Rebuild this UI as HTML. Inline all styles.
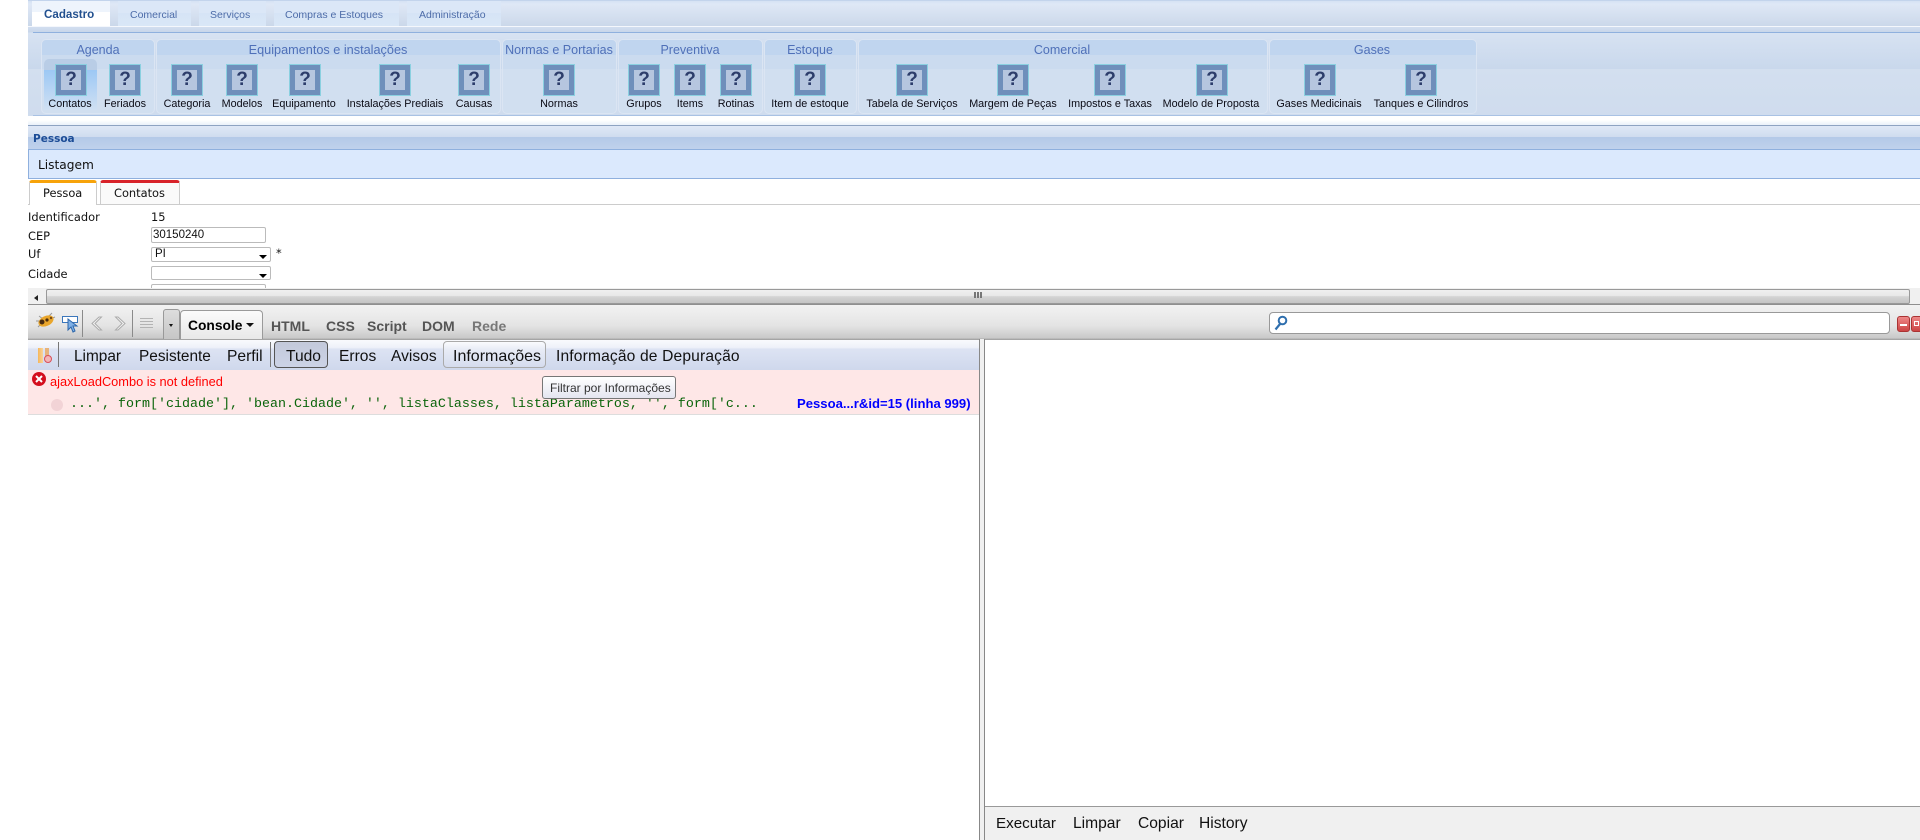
<!DOCTYPE html>
<html><head><meta charset="utf-8"><title>Pessoa</title>
<style>
html,body{margin:0;padding:0;background:#fff}
#p{position:relative;width:1920px;height:840px;overflow:hidden;background:#fff;font-family:"Liberation Sans",sans-serif;color:#000}
#p div,#p span,#p svg{position:absolute;display:block}
.t{white-space:nowrap;line-height:16px;height:16px}
.c{transform:translateX(-50%)}
.tab{top:1px;height:25px;background:linear-gradient(#dbe7f7 0,#dbe7f7 12px,#d6e4f6 12px,#d9e7f7 100%)}
.tt{top:7px;font-size:10.5px;color:#4d6ca8}
.g{top:39px;height:73px;border:1px solid #dbe5f3;border-radius:5px;background:linear-gradient(#c0d5ef 0,#c0d5ef 15px,#cbdbef 15px,#cbdbef 29px,#d1dff0 29px,#d1dff0 100%);box-sizing:content-box}
.gt{top:42px;font-size:12.5px;color:#4f70b8}
.i{top:64px;width:30px;height:30px;background:#6f8fbb;border:1px solid #8ad0e0}
.i span{left:5px;top:5px;width:20px;height:20px;background:#b6c6df;color:#2d3d6b;font:bold 19px/20px "Liberation Sans",sans-serif;text-align:center}
.l{top:96px;font-size:10.8px;color:#0a0a14}
.d{font-family:"DejaVu Sans",sans-serif;font-size:11.4px;color:#111}
.ff{background:#fff;border:1px solid #bbb;border-radius:2px;box-sizing:border-box}
.ar{width:0;height:0;border-left:4px solid transparent;border-right:4px solid transparent;border-top:4px solid #000}
.fb{font-weight:bold;font-size:14px;color:#555;top:318px}
.cb{font-size:15.6px;color:#111;top:349px}
.bt{font-size:15.6px;color:#111;top:816px}
</style></head><body><div id="p">

<!-- tab strip -->
<div style="left:28px;top:0;width:1892px;height:26px;background:linear-gradient(#d3e0f3 0,#dfe8f6 4px,#cbd8ea 100%)"></div>
<div style="left:28px;top:0;width:1892px;height:1px;background:#c3d4ec"></div>
<div style="left:28px;top:26px;width:1892px;height:1px;background:#f4f7fc"></div>
<div style="left:28px;top:27px;width:1892px;height:89px;background:linear-gradient(#d2def0 0,#c8d6ea 5px,#d7e2f2 6px,#c9d8ec 42px,#d3dfef 42px,#cfdcee 100%)"></div>
<div style="left:33px;top:32px;width:1887px;height:1px;background:#8fb0de"></div>
<div class="tab" style="left:32px;width:78px;background:linear-gradient(#eef4fc 0,#eef4fc 11px,#fff 11px,#fff 100%)"></div>
<div class="tab" style="left:118px;width:73px"></div>
<div class="tab" style="left:199px;width:67px"></div>
<div class="tab" style="left:274px;width:125px"></div>
<div class="tab" style="left:407px;width:94px"></div>
<span class="t" style="left:44px;top:7px;font-size:11.6px;font-weight:bold;color:#22508f">Cadastro</span>
<span class="t tt" style="left:130px">Comercial</span>
<span class="t tt" style="left:210px">Serviços</span>
<span class="t tt" style="left:285px">Compras e Estoques</span>
<span class="t tt" style="left:419px">Administração</span>

<!-- groups -->
<div class="g" style="left:41px;width:112px"></div>
<div class="g" style="left:156px;width:343px"></div>
<div class="g" style="left:502px;width:113px"></div>
<div class="g" style="left:618px;width:143px"></div>
<div class="g" style="left:764px;width:91px"></div>
<div class="g" style="left:858px;width:408px"></div>
<div class="g" style="left:1269px;width:206px"></div>

<div style="left:44px;top:59px;width:53px;height:51px;border-radius:5px 5px 0 0;background:linear-gradient(#b9cde6 0,#b9cde6 11px,#9cc8f4 11px,#d0e0f3 100%)"></div>

<span class="t gt c" style="left:98px">Agenda</span>
<span class="t gt c" style="left:328px;font-size:12.7px">Equipamentos e instalações</span>
<span class="t gt c" style="left:559px">Normas e Portarias</span>
<span class="t gt c" style="left:690px">Preventiva</span>
<span class="t gt c" style="left:810px">Estoque</span>
<span class="t gt c" style="left:1062px">Comercial</span>
<span class="t gt c" style="left:1372px">Gases</span>

<div class="i" style="left:55px"><span>?</span></div><span class="t l c" style="left:70px">Contatos</span>
<div class="i" style="left:109px"><span>?</span></div><span class="t l c" style="left:125px">Feriados</span>
<div class="i" style="left:171px"><span>?</span></div><span class="t l c" style="left:187px">Categoria</span>
<div class="i" style="left:226px"><span>?</span></div><span class="t l c" style="left:242px">Modelos</span>
<div class="i" style="left:289px"><span>?</span></div><span class="t l c" style="left:304px">Equipamento</span>
<div class="i" style="left:379px"><span>?</span></div><span class="t l c" style="left:395px">Instalações Prediais</span>
<div class="i" style="left:458px"><span>?</span></div><span class="t l c" style="left:474px">Causas</span>
<div class="i" style="left:543px"><span>?</span></div><span class="t l c" style="left:559px">Normas</span>
<div class="i" style="left:628px"><span>?</span></div><span class="t l c" style="left:644px">Grupos</span>
<div class="i" style="left:674px"><span>?</span></div><span class="t l c" style="left:690px">Items</span>
<div class="i" style="left:720px"><span>?</span></div><span class="t l c" style="left:736px">Rotinas</span>
<div class="i" style="left:794px"><span>?</span></div><span class="t l c" style="left:810px">Item de estoque</span>
<div class="i" style="left:896px"><span>?</span></div><span class="t l c" style="left:912px">Tabela de Serviços</span>
<div class="i" style="left:997px"><span>?</span></div><span class="t l c" style="left:1013px">Margem de Peças</span>
<div class="i" style="left:1094px"><span>?</span></div><span class="t l c" style="left:1110px">Impostos e Taxas</span>
<div class="i" style="left:1196px"><span>?</span></div><span class="t l c" style="left:1211px">Modelo de Proposta</span>
<div class="i" style="left:1304px"><span>?</span></div><span class="t l c" style="left:1319px">Gases Medicinais</span>
<div class="i" style="left:1405px"><span>?</span></div><span class="t l c" style="left:1421px">Tanques e Cilindros</span>

<div style="left:33px;top:115px;width:1887px;height:1px;background:#a9c2e4"></div>
<div style="left:28px;top:116px;width:1892px;height:9px;background:linear-gradient(#fff 0,#fff 4px,#eaf0f9 100%)"></div>
<div style="left:28px;top:125px;width:1892px;height:1px;background:#8ea3c2"></div>
<div style="left:28px;top:126px;width:1892px;height:11px;background:linear-gradient(#dfe8f6,#cfdcef)"></div>
<div style="left:28px;top:137px;width:1892px;height:12px;background:linear-gradient(#b3c9e8,#bfd1ec)"></div>
<span class="t" style="left:33px;top:131px;font:bold 10.5px/16px 'DejaVu Sans',sans-serif;color:#1c4c96">Pessoa</span>
<div style="left:28px;top:149px;width:1892px;height:30px;background:#dbe9fd;border-top:1px solid #8fb0de;border-bottom:1px solid #8fb0de;border-left:1px solid #8fb0de;box-sizing:border-box"></div>
<span class="t d" style="left:38px;top:157px;font-size:12.2px">Listagem</span>

<!-- form tabs -->
<div style="left:28px;top:204px;width:1892px;height:1px;background:#ccc"></div>
<div style="left:29px;top:180px;width:68px;height:25px;background:#fff;border:1px solid #ccc;border-bottom:0;border-top:3px solid #f7a30a;border-radius:3px 3px 0 0;box-sizing:border-box"></div>
<div style="left:100px;top:180px;width:80px;height:24px;background:#fafafa;border:1px solid #ccc;border-bottom:0;border-top:3px solid #d8232a;border-radius:3px 3px 0 0;box-sizing:border-box"></div>
<span class="t d" style="left:43px;top:185px;font-size:11.4px">Pessoa</span>
<span class="t d" style="left:114px;top:185px;font-size:11.4px">Contatos</span>

<!-- form -->
<span class="t d" style="left:28px;top:209px">Identificador</span>
<span class="t d" style="left:151px;top:209px">15</span>
<span class="t d" style="left:28px;top:228px">CEP</span>
<div class="ff" style="left:151px;top:227px;width:115px;height:16px"></div>
<span class="t" style="left:153px;top:227px;font-size:11.5px;color:#111">30150240</span>
<span class="t d" style="left:28px;top:246px">Uf</span>
<div class="ff" style="left:151px;top:247px;width:120px;height:15px"></div>
<span class="t" style="left:155px;top:246px;font-size:11.5px;color:#111">PI</span>
<div class="ar" style="left:259px;top:255px"></div>
<span class="t d" style="left:276px;top:245px">*</span>
<span class="t d" style="left:28px;top:266px">Cidade</span>
<div class="ff" style="left:151px;top:266px;width:120px;height:14px"></div>
<div class="ar" style="left:259px;top:274px"></div>
<div class="ff" style="left:151px;top:284px;width:115px;height:10px"></div>

<!-- h scrollbar -->
<div style="left:28px;top:288px;width:1892px;height:17px;background:#f0f0f0"></div>
<div style="left:46px;top:289px;width:1864px;height:15px;border:1px solid #999;border-radius:2px;box-sizing:border-box;background:linear-gradient(#f0f0f0 0,#e8e8e8 45%,#d4d4d4 50%,#c4c4c4 100%)"></div>
<div style="left:34px;top:295px;width:0;height:0;border-top:3px solid transparent;border-bottom:3px solid transparent;border-right:4px solid #222"></div>
<div style="left:974px;top:292px;width:2px;height:6px;background:#777"></div>
<div style="left:977px;top:292px;width:2px;height:6px;background:#777"></div>
<div style="left:980px;top:292px;width:2px;height:6px;background:#777"></div>

<!-- firebug toolbar -->
<div style="left:28px;top:304px;width:1892px;height:36px;background:linear-gradient(#8f8f8f 0,#8f8f8f 1px,#f2f2f2 1px,#e4e4e4 60%,#c9c9c9 94%,#9a9a9a 100%)"></div>
<svg style="left:35px;top:312px" width="21" height="17" viewBox="0 0 21 17"><path d="M3 15L8 10M1 9l5 0M4 4l4 3M17 1l-4 4M20 5l-5 2" stroke="#999" fill="none"/><ellipse cx="11" cy="9" rx="8" ry="5" fill="#e9a62c" transform="rotate(-25 11 9)"/><circle cx="7" cy="10" r="2.500" fill="#4a2c10"/><circle cx="12" cy="8" r="1.600" fill="#4a2c10"/><circle cx="16" cy="6" r="1.200" fill="#7a4a10"/></svg>
<svg style="left:62px;top:316px" width="17" height="18" viewBox="0 0 17 18"><rect x=".5" y=".5" width="15" height="6" fill="#fff" stroke="#3c77bb"/><path d="M6 3l0 11 3-3 2 5 2-1-2-5 4 0z" fill="#7fb0e6" stroke="#2d66aa"/></svg>
<div style="left:82px;top:310px;width:1px;height:27px;background:#8a8a8a"></div>
<svg style="left:91px;top:316px" width="12" height="15" viewBox="0 0 12 15"><path d="M8 1L1 7.500L8 14L10.500 14L4 7.500L10.500 1Z" fill="#f4f4f4" stroke="#ababab"/></svg>
<svg style="left:114px;top:316px" width="12" height="15" viewBox="0 0 12 15"><path d="M4 1L11 7.500L4 14L1.500 14L8 7.500L1.500 1Z" fill="#f4f4f4" stroke="#ababab"/></svg>
<div style="left:132px;top:310px;width:1px;height:27px;background:#8a8a8a"></div>
<svg style="left:140px;top:318px" width="14" height="12" viewBox="0 0 14 12"><path d="M0 .5h13M0 3.500h13M0 6.500h13M0 9.500h13" stroke="#b3b3b3"/></svg>
<div style="left:163px;top:309px;width:17px;height:30px;border:1px solid #999;border-bottom:0;border-radius:3px 3px 0 0;box-sizing:border-box;background:linear-gradient(#ddd,#c6c6c6)"></div>
<div style="left:169px;top:324px;width:0;height:0;border-left:2.500px solid transparent;border-right:2.500px solid transparent;border-top:3px solid #111"></div>
<div style="left:180px;top:310px;width:83px;height:29px;border:1px solid #9a9a9a;border-bottom:0;border-radius:4px 4px 0 0;box-sizing:border-box;background:linear-gradient(#fbfbfb,#e8e8e8)"></div>
<span class="t" style="left:188px;top:318px;font-size:13.8px;font-weight:bold;color:#000">Console</span>
<div style="left:246px;top:323px;width:0;height:0;border-left:4px solid transparent;border-right:4px solid transparent;border-top:4px solid #111"></div>
<span class="t fb" style="left:271px">HTML</span>
<span class="t fb" style="left:326px">CSS</span>
<span class="t fb" style="left:367px">Script</span>
<span class="t fb" style="left:422px">DOM</span>
<span class="t fb" style="left:472px;color:#777">Rede</span>

<div style="left:1269px;top:312px;width:621px;height:22px;background:#fff;border:1px solid #999;border-radius:4px;box-sizing:border-box"></div>
<svg style="left:1274px;top:315px" width="14" height="16" viewBox="0 0 14 16"><circle cx="8.500" cy="5.500" r="3.800" fill="none" stroke="#2f6fae" stroke-width="2"/><path d="M6 9L1.500 14.500" stroke="#2f6fae" stroke-width="2.200"/></svg>
<div style="left:1897px;top:316px;width:13px;height:16px;background:linear-gradient(#e88,#c44);border:1px solid #a33;border-radius:3px;box-sizing:border-box"></div>
<div style="left:1900px;top:324px;width:7px;height:2px;background:#fff"></div>
<div style="left:1911px;top:316px;width:13px;height:16px;background:linear-gradient(#e88,#c44);border:1px solid #a33;border-radius:3px;box-sizing:border-box"></div>
<div style="left:1914px;top:321px;width:5px;height:5px;border:1px solid #fff;box-sizing:border-box"></div>

<!-- console bar -->
<div style="left:28px;top:340px;width:951px;height:30px;background:linear-gradient(#f9fafd 0,#eef1f9 25%,#dde3f3 30%,#cfd8ec 100%);border-bottom:1px solid #aab"></div>
<div style="left:38px;top:348px;width:5px;height:15px;background:linear-gradient(90deg,#f6b65a,#f8d49a)"></div>
<div style="left:45px;top:348px;width:4px;height:8px;background:#e7b27a"></div>
<div style="left:44px;top:355px;width:8px;height:8px;border:1.500px solid #d8505a;border-radius:50%;background:#f3b5b5;box-sizing:border-box"></div>
<div style="left:58px;top:342px;width:1px;height:25px;background:#777"></div>
<span class="t cb" style="left:74px;font-size:15.4px">Limpar</span>
<span class="t cb" style="left:139px;font-size:15.4px">Pesistente</span>
<span class="t cb" style="left:227px">Perfil</span>
<div style="left:270px;top:342px;width:1px;height:25px;background:#777"></div>
<div style="left:274px;top:341px;width:54px;height:27px;background:linear-gradient(#c3c9da,#ccd3e6);border:1px solid #555;border-radius:4px;box-sizing:border-box"></div>
<span class="t cb" style="left:286px">Tudo</span>
<span class="t cb" style="left:339px">Erros</span>
<span class="t cb" style="left:391px">Avisos</span>
<div style="left:443px;top:341px;width:103px;height:27px;background:linear-gradient(#fafbfe,#e8ecf6 30%,#d5dcee);border:1px solid #aaa;border-radius:4px;box-sizing:border-box"></div>
<span class="t cb" style="left:453px;font-size:16px">Informações</span>
<span class="t cb" style="left:556px;letter-spacing:.15px">Informação de Depuração</span>

<!-- error -->
<div style="left:28px;top:370px;width:951px;height:45px;background:#fee7e7;border-bottom:1px solid #ddd;box-sizing:border-box"></div>
<div style="left:32px;top:372px;width:14px;height:14px;border-radius:50%;background:#d40f1e"></div>
<svg style="left:35px;top:375px" width="8" height="8" viewBox="0 0 8 8"><path d="M1 1l6 6M7 1L1 7" stroke="#fff" stroke-width="2"/></svg>
<span class="t" style="left:50px;top:374px;font-size:12.8px;color:#f00">ajaxLoadCombo is not defined</span>
<div style="left:51px;top:399px;width:12px;height:12px;border-radius:50%;background:#f2d3d6"></div>
<span class="t" style="left:70px;top:397px;font:13.33px/16px 'Liberation Mono',monospace;color:#0a640a;white-space:pre">...', form['cidade'], 'bean.Cidade', '', listaClasses, listaParametros, '', form['c...</span>
<span class="t" style="left:797px;top:396px;font-size:13.1px;font-weight:bold;color:#00f">Pessoa...r&amp;id=15 (linha 999)</span>

<!-- tooltip -->
<div style="left:542px;top:376px;width:134px;height:23px;background:linear-gradient(#fff,#e4e5f0);border:1px solid #767676;border-radius:3px;box-sizing:border-box"></div>
<span class="t" style="left:550px;top:380px;font-size:12px;color:#333">Filtrar por Informações</span>

<!-- splitter -->
<div style="left:979px;top:339px;width:1px;height:501px;background:#888"></div>
<div style="left:980px;top:339px;width:4px;height:501px;background:#f0f0f0"></div>
<div style="left:984px;top:339px;width:1px;height:501px;background:#888"></div>

<!-- bottom right -->
<div style="left:985px;top:806px;width:935px;height:34px;background:#f0f0f0;border-top:1px solid #999;box-sizing:border-box"></div>
<span class="t bt" style="left:996px;font-size:15.2px">Executar</span>
<span class="t bt" style="left:1073px">Limpar</span>
<span class="t bt" style="left:1138px">Copiar</span>
<span class="t bt" style="left:1199px">History</span>

</div></body></html>
